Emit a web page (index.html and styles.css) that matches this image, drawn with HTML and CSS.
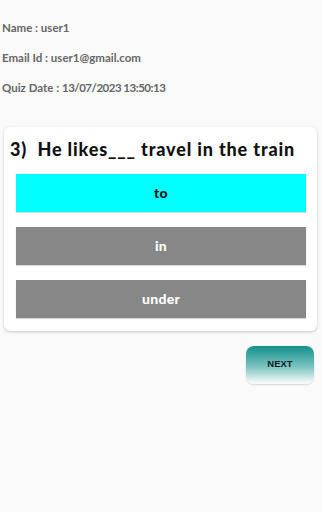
FILE: index.html
```html
<!DOCTYPE html>
<html>
<head>
<meta charset="utf-8">
<link rel="stylesheet" href="styles.css">
</head>
<body>
<div class="info">
  <div class="info-line">Name : user1</div>
  <div class="info-line">Email Id : user1@gmail.com</div>
  <div class="info-line">Quiz Date : <span class="date">13/07/2023 13:50:13</span></div>
</div>
<div class="card">
  <div class="question">3)&nbsp; He likes___ travel in the train</div>
  <div class="options">
    <div class="option selected">to</div>
    <div class="option">in</div>
    <div class="option">under</div>
  </div>
</div>
<div class="actions">
  <div class="next">NEXT</div>
</div>
</body>
</html>
```
FILE: styles.css
```css
html, body {
  margin: 0;
  padding: 0;
  background: #fafafa;
}
body {
  width: 322px;
  height: 512px;
  font-family: "Lato", "Noto Sans", sans-serif;
}
.info {
  padding: 13px 0 0 2px;
  height: 127px;
  box-sizing: border-box;
}
.info-line {
  height: 30px;
  line-height: 30px;
  font-size: 11.5px;
  font-weight: 700;
  color: #666666;
}
.date {
  letter-spacing: -0.5px;
}
.card {
  margin: 0 5px 0 4px;
  background: #ffffff;
  border-radius: 6px;
  box-shadow: 0 1px 3px rgba(0,0,0,0.22);
  padding: 8px 11px 13px 12px;
}
.question {
  height: 28px;
  line-height: 28px;
  font-size: 18px;
  font-weight: 900;
  letter-spacing: 0.85px;
  color: #111111;
  margin-left: -6px;
  margin-bottom: 11px;
  white-space: nowrap;
}
.options {
  display: flex;
  flex-direction: column;
  gap: 15px;
}
.option {
  height: 38px;
  line-height: 38px;
  text-align: center;
  background: #878787;
  color: #ffffff;
  font-size: 14px;
  font-weight: 900;
  letter-spacing: 0.3px;
  box-shadow: 0 1px 1px rgba(0,0,0,0.15);
}
.option.selected {
  background: #00ffff;
  color: #111111;
}
.actions {
  display: flex;
  justify-content: flex-end;
  padding: 15px 8px 0 0;
}
.next {
  width: 68px;
  height: 38px;
  line-height: 36px;
  text-align: center;
  border-radius: 8px;
  background: linear-gradient(to bottom, #13908b 0%, #7cc4c1 55%, #ffffff 100%);
  box-shadow: 0 1px 2px rgba(0,0,0,0.15);
  font-family: "Liberation Sans", Arial, sans-serif;
  font-weight: 700;
  font-size: 9.5px;
  color: #1a1a1a;
}
```
